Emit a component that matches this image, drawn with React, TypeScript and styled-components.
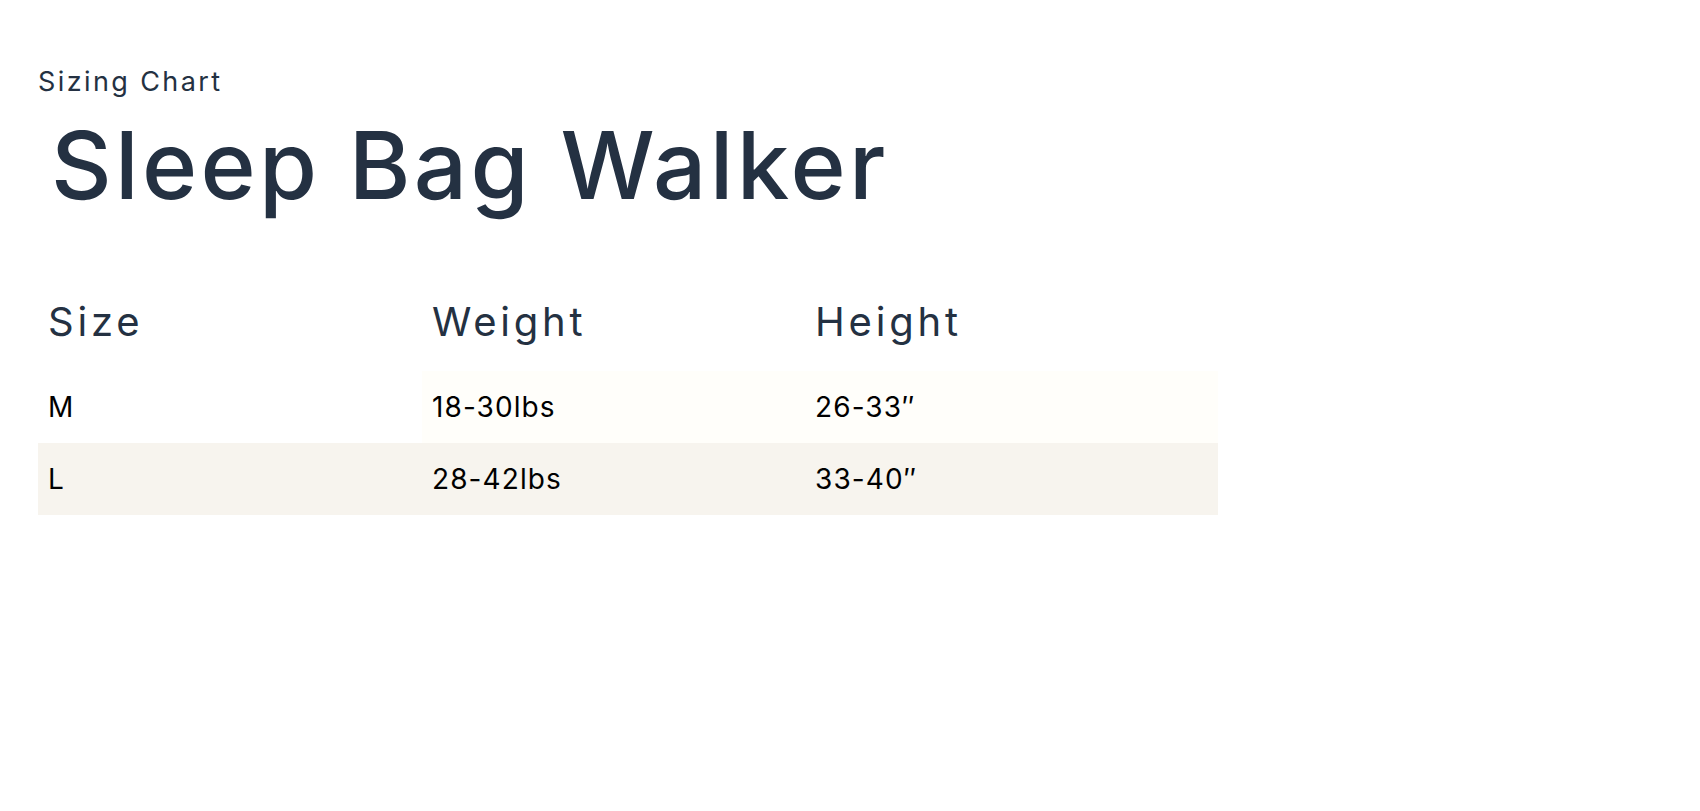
import React from 'react';
import styled, { createGlobalStyle } from 'styled-components';

const GlobalStyle = createGlobalStyle`
  body {
    margin: 0;
    background: #fff;
    font-family: Inter, "Noto Sans", sans-serif;
  }
`;

const Page = styled.div`
  min-height: 100vh;
  padding: 66px 38px 0;
  box-sizing: border-box;
`;

const Eyebrow = styled.p`
  margin: 0;
  font-size: 27px;
  line-height: 1.2;
  letter-spacing: 2.4px;
  color: #243142;
`;

const Title = styled.h1`
  margin: 11px 0 0;
  padding-left: 13px;
  font-size: 94px;
  font-weight: 500;
  line-height: 1.2;
  letter-spacing: 3.3px;
  color: #243142;
`;

const Table = styled.table`
  margin-top: 76px;
  width: 1180px;
  border-collapse: collapse;
  table-layout: fixed;
`;

const HeadCell = styled.th`
  padding: 0 0 25px 10px;
  text-align: left;
  font-size: 40px;
  font-weight: 400;
  line-height: 48px;
  letter-spacing: 3.8px;
  color: #243142;
`;

const Row = styled.tr<{ $shade?: boolean }>`
  background: ${(p) => (p.$shade ? '#f7f4ee' : 'transparent')};
`;

const Cell = styled.td<{ $tint?: boolean }>`
  padding: 0 0 0 10px;
  height: 72px;
  font-size: 28px;
  line-height: 72px;
  letter-spacing: 1.1px;
  color: #000;
  background: ${(p) => (p.$tint ? '#fffefa' : 'transparent')};
`;

const rows = [
  { size: 'M', weight: '18-30lbs', height: '26-33″' },
  { size: 'L', weight: '28-42lbs', height: '33-40″' },
];

export default function App() {
  return (
    <>
      <GlobalStyle />
      <Page>
        <Eyebrow>Sizing Chart</Eyebrow>
        <Title>Sleep Bag Walker</Title>
        <Table>
          <colgroup>
            <col style={{ width: 384 }} />
            <col style={{ width: 383 }} />
            <col />
          </colgroup>
          <thead>
            <tr>
              <HeadCell>Size</HeadCell>
              <HeadCell>Weight</HeadCell>
              <HeadCell>Height</HeadCell>
            </tr>
          </thead>
          <tbody>
            {rows.map((r, i) => (
              <Row key={r.size} $shade={i % 2 === 1}>
                <Cell>{r.size}</Cell>
                <Cell $tint={i % 2 === 0}>{r.weight}</Cell>
                <Cell $tint={i % 2 === 0}>{r.height}</Cell>
              </Row>
            ))}
          </tbody>
        </Table>
      </Page>
    </>
  );
}
